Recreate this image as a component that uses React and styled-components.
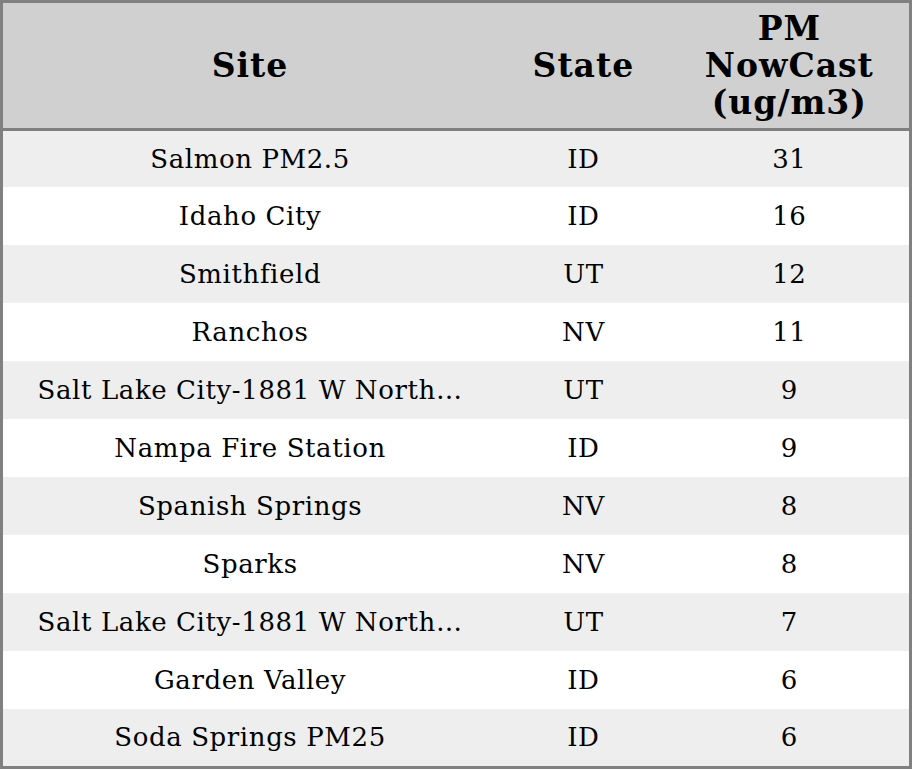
import React from 'react'
import styled, { createGlobalStyle } from 'styled-components'

const GlobalStyle = createGlobalStyle`
  html, body {
    margin: 0;
    padding: 0;
    background: #ffffff;
  }
`

const Table = styled.table`
  width: 912px;
  box-sizing: border-box;
  border: 3px solid #808080;
  border-collapse: collapse;
  table-layout: fixed;
  font-family: "DejaVu Serif", serif;
  color: #000;
`

const HeadCell = styled.th`
  background: #d0d0d0;
  font-size: 33px;
  line-height: 37px;
  letter-spacing: 1px;
  font-weight: bold;
  text-align: center;
  padding: 7px 10px;
  height: 111px;
  border-bottom: 3px solid #808080;
`

const Row = styled.tr`
  height: 58px;
  background: ${({ striped }) => (striped ? '#eeeeee' : '#ffffff')};
  &:first-child {
    height: 57px;
  }
  &:last-child {
    height: 59px;
  }
`

const Cell = styled.td`
  font-size: 26px;
  text-align: center;
  padding: 0 ${({ wide }) => (wide ? '32px' : '10px')};
  white-space: nowrap;
  overflow: hidden;
  letter-spacing: 0.6px;
`

const rows = [
  { site: 'Salmon PM2.5', state: 'ID', value: 31 },
  { site: 'Idaho City', state: 'ID', value: 16 },
  { site: 'Smithfield', state: 'UT', value: 12 },
  { site: 'Ranchos', state: 'NV', value: 11 },
  { site: 'Salt Lake City-1881 W North…', state: 'UT', value: 9 },
  { site: 'Nampa Fire Station', state: 'ID', value: 9 },
  { site: 'Spanish Springs', state: 'NV', value: 8 },
  { site: 'Sparks', state: 'NV', value: 8 },
  { site: 'Salt Lake City-1881 W North…', state: 'UT', value: 7 },
  { site: 'Garden Valley', state: 'ID', value: 6 },
  { site: 'Soda Springs PM25', state: 'ID', value: 6 }
]

const App = () => {
  return (
    <>
      <GlobalStyle />
      <Table>
        <colgroup>
          <col style={{ width: 494 }} />
          <col style={{ width: 172 }} />
          <col style={{ width: 240 }} />
        </colgroup>
        <thead>
          <tr>
            <HeadCell>Site</HeadCell>
            <HeadCell>State</HeadCell>
            <HeadCell>PM NowCast (ug/m3)</HeadCell>
          </tr>
        </thead>
        <tbody>
          {rows.map((r, i) => (
            <Row key={i} striped={i % 2 === 0}>
              <Cell wide>{r.site}</Cell>
              <Cell>{r.state}</Cell>
              <Cell>{r.value}</Cell>
            </Row>
          ))}
        </tbody>
      </Table>
    </>
  )
}

export default App
